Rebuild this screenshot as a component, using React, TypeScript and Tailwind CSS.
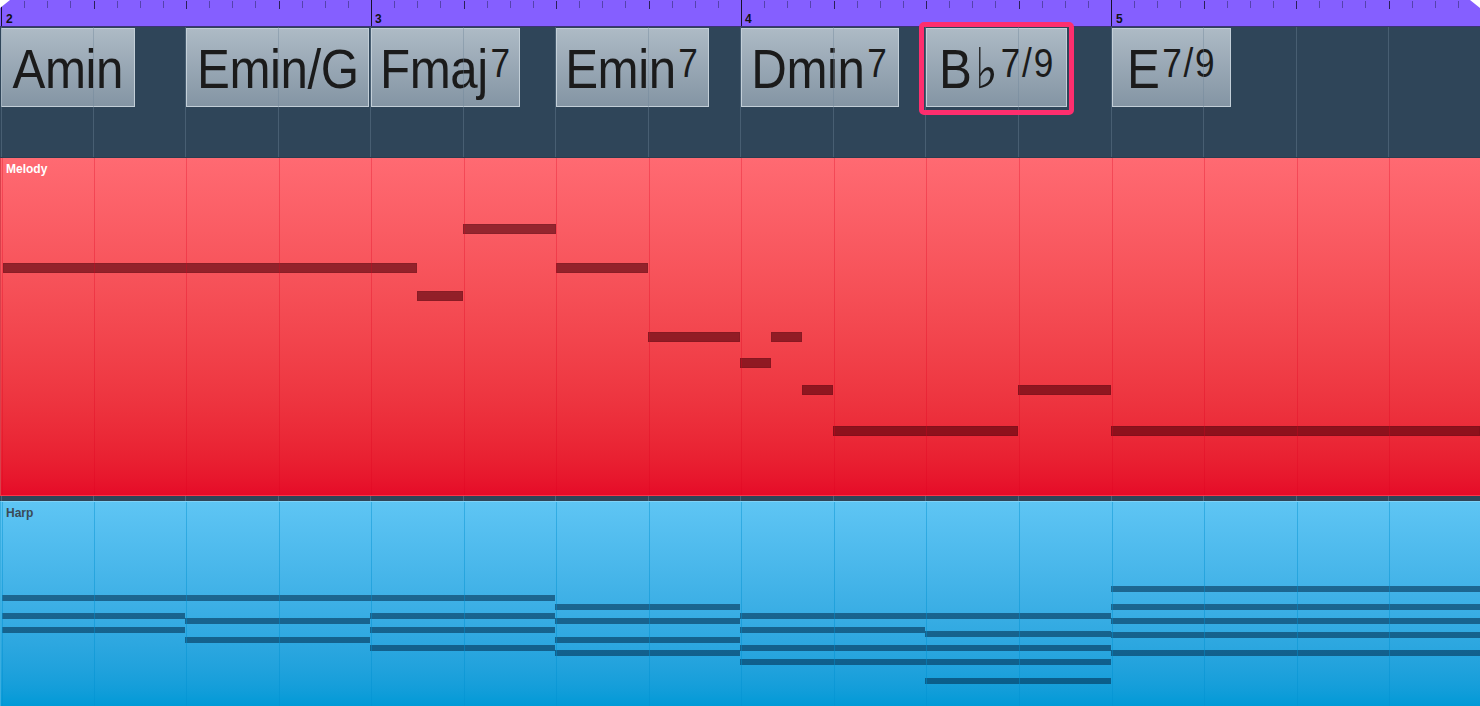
import clsx from 'clsx'

// beat positions (px) across four bars, 92.5px per beat
const BEATS = [1, 93, 185, 278, 370, 463, 555, 648, 740, 833, 925, 1018, 1111, 1203, 1296, 1388]
const BARS = [
  { x: 1, n: 2 },
  { x: 370, n: 3 },
  { x: 740, n: 4 },
  { x: 1111, n: 5 },
]

type Chord = { x: number; w: number; name: string; flat?: boolean; sup?: string; selected?: boolean }

const chords: Chord[] = [
  { x: 1, w: 134, name: 'Amin' },
  { x: 186, w: 183, name: 'Emin/G' },
  { x: 371, w: 149, name: 'Fmaj', sup: '7' },
  { x: 556, w: 153, name: 'Emin', sup: '7' },
  { x: 741, w: 158, name: 'Dmin', sup: '7' },
  { x: 926, w: 141, name: 'B', flat: true, sup: '7/9', selected: true },
  { x: 1112, w: 119, name: 'E', sup: '7/9' },
]

// [start, end, top] in px, relative to the region
type Note = [number, number, number]

const melody: Note[] = [
  [3, 417, 105],
  [417, 463, 133],
  [463, 556, 66],
  [556, 648, 105],
  [648, 740, 174],
  [740, 771, 200],
  [771, 802, 174],
  [802, 833, 227],
  [833, 1018, 268],
  [1018, 1111, 227],
  [1111, 1480, 268],
]

const harp: Note[] = [
  [2, 555, 93],
  [2, 185, 111],
  [2, 185, 125],
  [185, 370, 116],
  [185, 370, 135],
  [370, 555, 111],
  [370, 555, 125],
  [370, 555, 143],
  [555, 740, 102],
  [555, 740, 116],
  [555, 740, 135],
  [555, 740, 148],
  [740, 1111, 111],
  [740, 925, 125],
  [925, 1111, 129],
  [740, 1111, 143],
  [740, 1111, 157],
  [925, 1111, 176],
  [1111, 1480, 84],
  [1111, 1480, 102],
  [1111, 1480, 116],
  [1111, 1480, 130],
  [1111, 1480, 148],
]

function Grid({ line }: { line: string }) {
  return (
    <div className="pointer-events-none absolute inset-0">
      {BEATS.map((x) => (
        <div key={x} className={clsx('absolute top-0 bottom-0 w-px', line)} style={{ left: x }} />
      ))}
    </div>
  )
}

function Ruler() {
  const ticks = Array.from({ length: 64 }, (_, j) => j)
  return (
    <div className="h-[27px] shrink-0 border-b border-[#3d3275] bg-[#855fff]">
      <svg width={1480} height={26} className="block">
        {ticks.map((j) => {
          const x = Math.round(1 + j * 23.125) + 0.5
          if (j % 16 === 0) return <line key={j} x1={x} x2={x} y1={0} y2={26} stroke="#15112a" />
          if (j % 4 === 0) return <line key={j} x1={x} x2={x} y1={1} y2={9} stroke="#2a2158" />
          return <line key={j} x1={x} x2={x} y1={1} y2={8} stroke="#5542ad" />
        })}
        {BARS.map((b) => (
          <text
            key={b.n}
            x={b.x + 5}
            y={23}
            fontSize={12}
            fontWeight="bold"
            fill="#111"
            fontFamily="'Liberation Sans', Arial, sans-serif"
          >
            {b.n}
          </text>
        ))}
        <polygon points="0,0 10,0 0,8" fill="#fff" />
        <polygon points="1470,0 1480,0 1480,8" fill="#fff" />
      </svg>
    </div>
  )
}

function ChordBlock({ chord }: { chord: Chord }) {
  return (
    <div
      className="absolute top-px flex h-[79px] justify-center whitespace-nowrap border border-[#c3cfd8] bg-linear-to-b from-[#adbac5] to-[#8495a4] pt-[12px] text-[56px] leading-none tracking-[-0.5px] text-[#1b1b1b]"
      style={{ left: chord.x, width: chord.w }}
    >
      <span className="origin-center scale-x-[0.88]">
        {chord.name}
        {chord.flat && (
          <span className="ml-[4px] font-['DejaVu_Sans'] text-[56px] leading-[0] tracking-normal">♭</span>
        )}
        {chord.sup && (
          <span className="ml-[3px] align-[11px] text-[40px] tracking-[2px]">{chord.sup}</span>
        )}
      </span>
    </div>
  )
}

function ChordTrack() {
  return (
    <div className="relative h-[131px] shrink-0 border-b border-[#2a3d50] bg-[#2f4559]">
      {chords.map((c) => (
        <ChordBlock key={c.x} chord={c} />
      ))}
      <Grid line="bg-[#6e8499]/40" />
    </div>
  )
}

function Region({
  label,
  notes,
  noteH,
  className,
  labelClass,
  noteClass,
  line,
}: {
  label: string
  notes: Note[]
  noteH: string
  className: string
  labelClass: string
  noteClass: string
  line: string
}) {
  return (
    <div className={clsx('relative shrink-0 border-l', className)}>
      <div className={clsx('px-[5px] pt-[5px] text-[12px] font-bold leading-none', labelClass)}>{label}</div>
      {notes.map(([a, b, top], i) => (
        <div
          key={i}
          className={clsx('absolute', noteH, noteClass)}
          style={{ left: a - 1, width: b - a, top }}
        />
      ))}
      <Grid line={line} />
    </div>
  )
}

export default function App() {
  return (
    <div className="relative flex h-[706px] w-[1480px] flex-col overflow-hidden bg-[#2f4559] font-['Liberation_Sans',Arial,sans-serif]">
      <Ruler />
      <ChordTrack />
      <Region
        label="Melody"
        notes={melody}
        noteH="h-[10px]"
        className="h-[338px] border-[#d8404c] border-b-[#ff3347] border-b bg-linear-to-b from-[#ff6a72] to-[#e60a28]"
        labelClass="text-white"
        noteClass="bg-[#50000a]/60 border border-[#3c000a]/10"
        line="bg-[#e0001e]/30"
      />
      <div className="relative h-[5px] shrink-0 bg-[#2f4559]">
        <Grid line="bg-[#4a6378]" />
      </div>
      <Region
        label="Harp"
        notes={harp}
        noteH="h-[6px]"
        className="h-[205px] border-[#3aaee0] border-t border-t-[#7fd2f7] bg-linear-to-b from-[#5ec5f4] to-[#009ad7]"
        labelClass="text-[#3a4a56]"
        noteClass="bg-[#002848]/55"
        line="bg-[#0090d0]/45"
      />
      <div className="pointer-events-none absolute left-[919px] top-[22px] h-[93px] w-[155px] rounded-[5px] border-[5px] border-[#fe2e6e]" />
    </div>
  )
}
